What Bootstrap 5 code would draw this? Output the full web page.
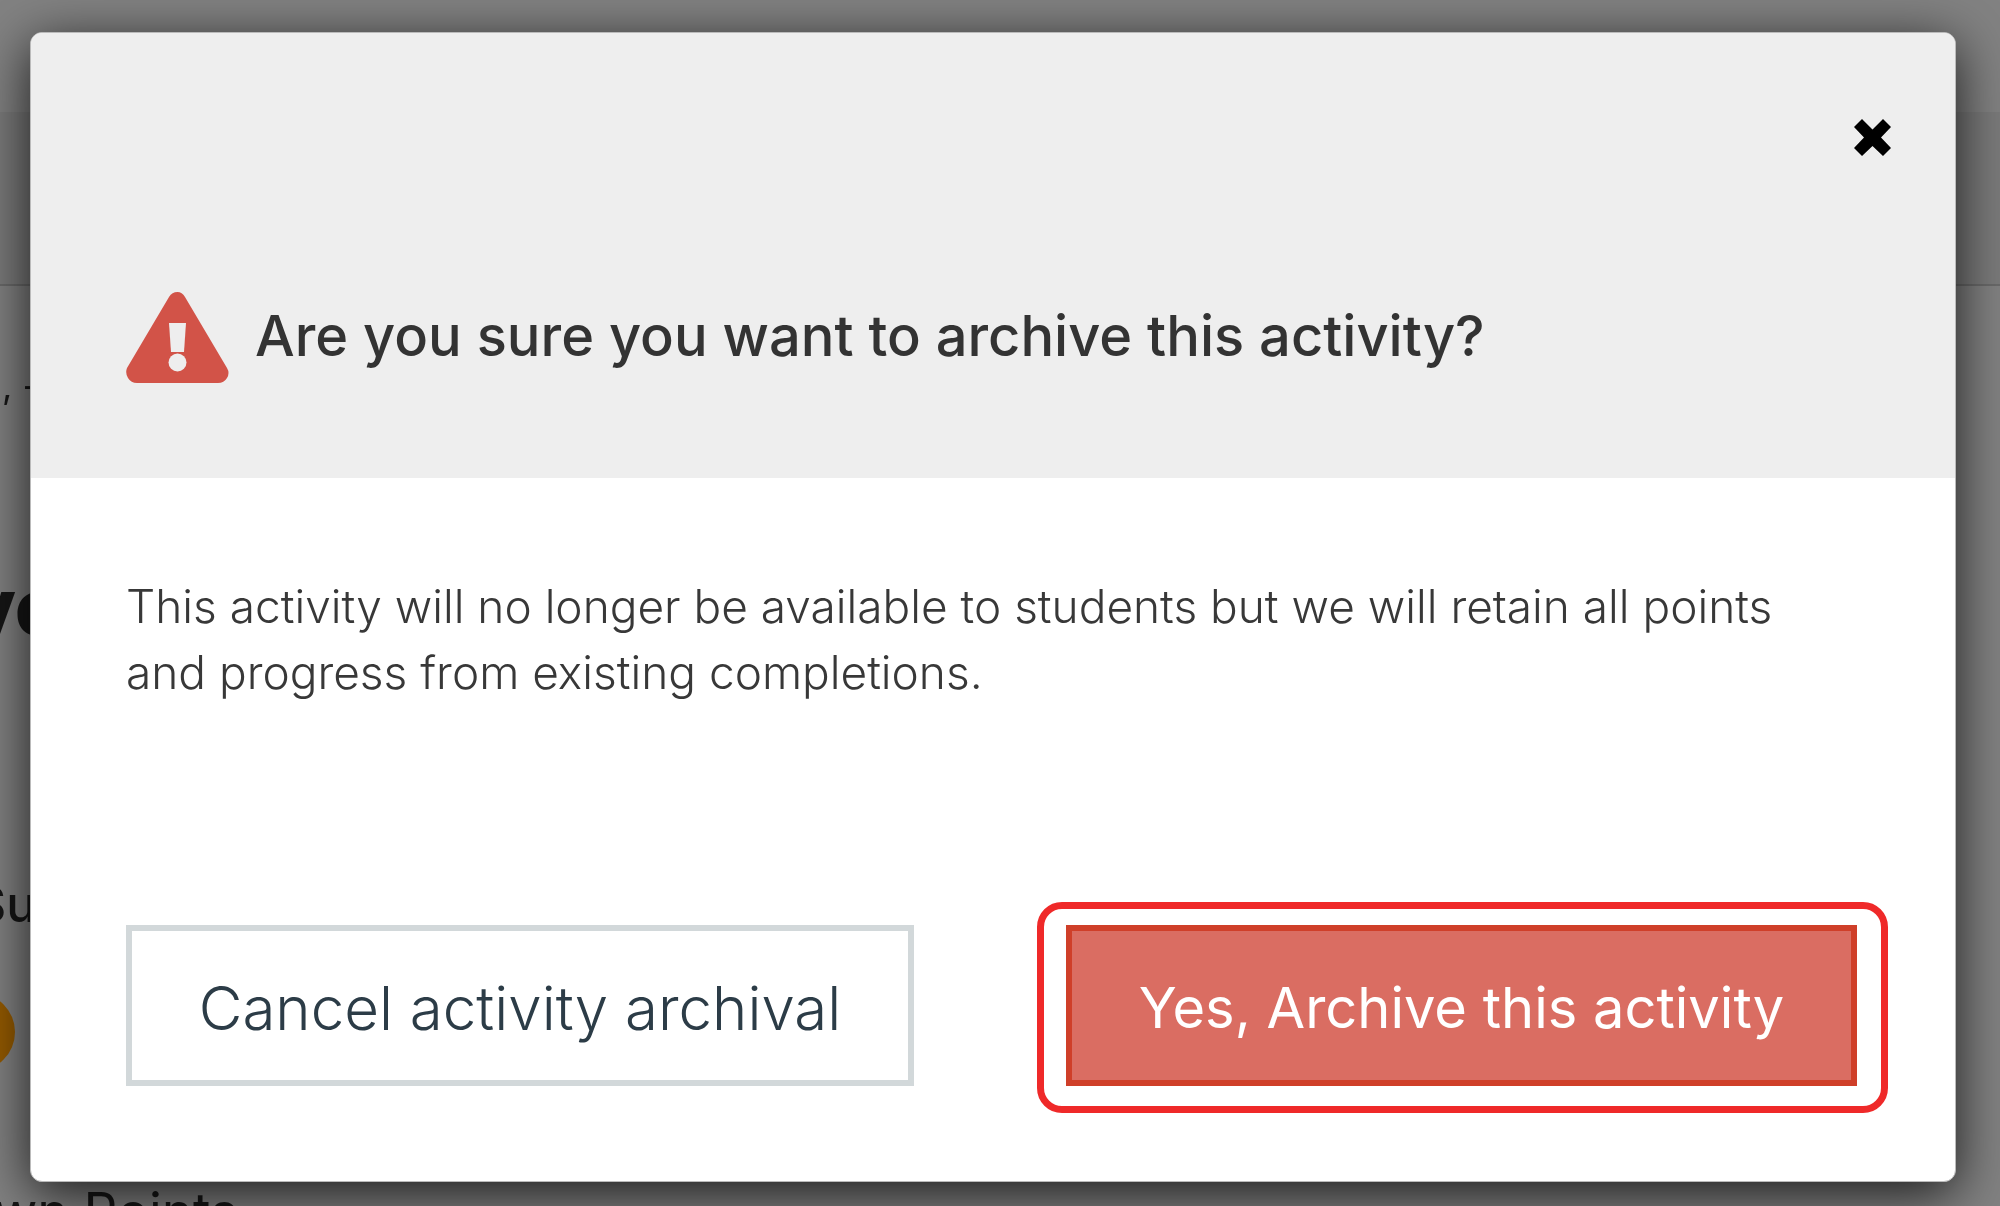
<!DOCTYPE html>
<html lang="en">
<head>
<meta charset="utf-8">
<meta name="viewport" content="width=device-width, initial-scale=1">
<title>Archive activity</title>
<link href="https://cdn.jsdelivr.net/npm/bootstrap@5.3.0/dist/css/bootstrap.min.css" rel="stylesheet">
<style>
body{font-family:Inter,"Open Sans",sans-serif;background:#828282;color:#161616}
/* dimmed page under the dialog */
.page-behind{z-index:0;white-space:nowrap}
.behind-top{height:112px}
.behind-bar{height:174px;background:#7b7b7b;border-bottom:2px solid #6a6a6a}
.behind-meta{font-size:36px;line-height:200px;padding-left:2px}
.behind-title{font-size:78px;line-height:242px;font-weight:800;margin:0 0 87px -32px}
.behind-sub{font-size:50px;line-height:178px;font-weight:500;margin:0 0 0 -26px}
.behind-dot{width:78px;height:78px;margin-left:-63px;border-radius:50%;background:#945a00}
.behind-points{font-size:53px;line-height:72px;margin:105px 0 0 -6px}
.dialog-wrap{z-index:1;padding:32px 44px 24px 30px}
.dialog-box{border:1px solid #bbb;border-radius:12px;background:#fff;box-shadow:0 12px 54px rgba(0,0,0,.8);overflow:hidden}
.dialog-head{background:#eee;padding:86px 64px 94px 95px}
.close-btn{line-height:0;margin-bottom:136px}
.dialog-title{font-size:56px;line-height:80px;font-weight:500;color:#333;padding:0 0 4px 26px}
.dialog-text{font-size:46px;line-height:66px;font-weight:300;color:#383838;padding:95px 120px 64px 95px}
.dialog-actions{gap:123px;padding:0 67px 68px 95px}
.act-btn{font-size:56px;line-height:80px;height:161px;border-radius:0;border-width:6px;padding:4px 0 0}
.btn-cancel,.btn-cancel:hover{flex:1 1 788px;font-size:60px;font-weight:300;margin-top:23px;background:#fff;border-color:#d2d8da;color:#2c3c47}
.btn-archive,.btn-archive:hover{background:#da6d62;border-color:#cf3f29;color:#fff}
.highlight-ring{flex:1 1 851px;border:7px solid #ef2929;border-radius:25px;padding:16px 24px 20px 22px}
</style>
</head>
<body>
<div class="page-behind position-fixed top-0 start-0 w-100 h-100 overflow-hidden" aria-hidden="true">
  <div class="behind-top"></div>
  <div class="behind-bar"></div>
  <div class="behind-meta">, -</div>
  <div class="behind-title">ve</div>
  <div class="behind-sub">Su</div>
  <div class="behind-dot"></div>
  <div class="behind-points">wn Points</div>
</div>
<div class="dialog-wrap position-relative d-flex min-vh-100">
  <main class="dialog-box w-100 d-flex flex-column" role="dialog" aria-labelledby="dialogTitle" aria-describedby="dialogText">
    <header class="dialog-head d-flex flex-column">
      <button type="button" class="close-btn border-0 bg-transparent p-0 align-self-end" aria-label="Close">
        <svg width="37" height="37" viewBox="0 0 37 37" aria-hidden="true"><path d="M8 0 18.500 10.500 29 0 37 8 27 18.500 37 29 29 37 18.500 27 8 37 0 29 10 18.500 0 8Z" fill="#000"/></svg>
      </button>
      <div class="d-flex align-items-center">
        <svg class="flex-shrink-0" width="103" height="92" viewBox="0 0 103 92" aria-hidden="true">
          <path d="M43 5Q46 0 51.500 0Q56 0 59 5L101 76Q104 81 101 86Q98 91 92 91H11Q5 91 2 86Q-1 81 1 76Z" fill="#d25348"/>
          <path d="M43 31H60L58 60H45Z" fill="#eee"/><circle cx="51.500" cy="70.500" r="9" fill="#eee"/>
        </svg>
        <h1 id="dialogTitle" class="dialog-title m-0">Are you sure you want to archive this activity?</h1>
      </div>
    </header>
    <p id="dialogText" class="dialog-text m-0">This activity will no longer be available to students but we will retain all points and progress from existing completions.</p>
    <div class="dialog-actions d-flex align-items-start mt-auto">
      <button type="button" class="btn act-btn btn-cancel">Cancel activity archival</button>
      <div class="highlight-ring">
        <button type="button" class="btn act-btn btn-archive w-100">Yes, Archive this activity</button>
      </div>
    </div>
  </main>
</div>
<script src="https://cdn.jsdelivr.net/npm/bootstrap@5.3.0/dist/js/bootstrap.bundle.min.js"></script>
</body>
</html>
